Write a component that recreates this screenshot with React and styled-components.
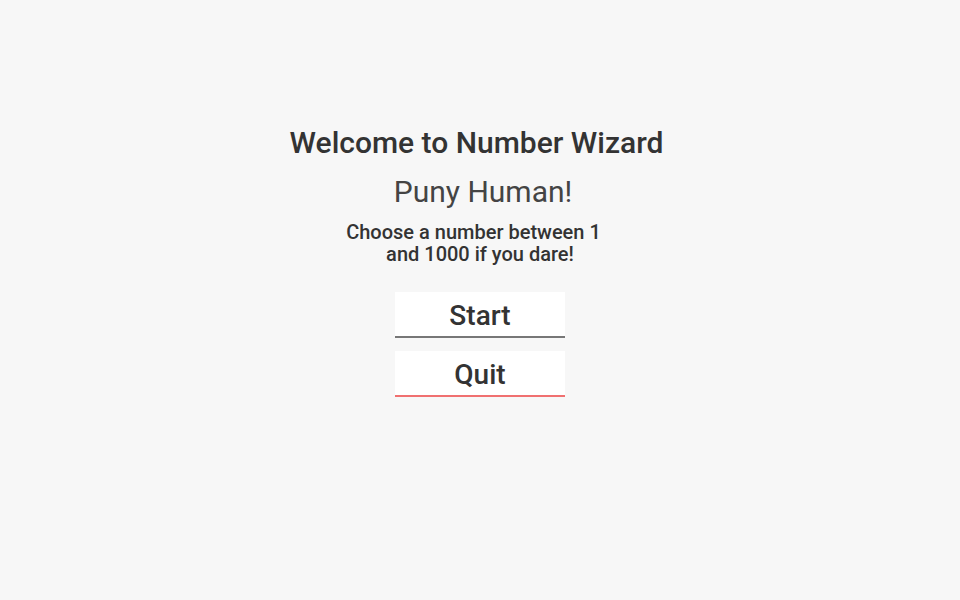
import React from "react";
import styled, { createGlobalStyle } from "styled-components";

const Global = createGlobalStyle`
  html, body { margin: 0; padding: 0; background: #f7f7f7; }
  body { font-family: Roboto, "Noto Sans", sans-serif; color: #333; }
`;

const Page = styled.div`
  width: 960px;
  height: 600px;
  display: flex;
  flex-direction: column;
  align-items: center;
  padding-top: 125px;
  box-sizing: border-box;
`;

const Title = styled.h1`
  margin: 0 7px 0 0;
  font-size: 30px;
  font-weight: 500;
  line-height: 36px;
  color: #333;
`;

const Subtitle = styled.h2`
  margin: 13px 0 0 6px;
  font-size: 30px;
  font-weight: 400;
  line-height: 36px;
  color: #444;
`;

const Prompt = styled.p`
  margin: 11px 0 0;
  width: 270px;
  text-align: center;
  font-size: 20px;
  font-weight: 500;
  line-height: 22px;
  color: #333;
`;

const Line = styled.span`
  display: block;
  padding-right: ${(p) => p.$shift || 0}px;
`;

const Buttons = styled.div`
  margin-top: 27px;
  display: flex;
  flex-direction: column;
  gap: 13px;
`;

const Button = styled.button`
  width: 170px;
  height: 46px;
  box-sizing: border-box;
  border: none;
  border-bottom: 2px solid ${(p) => p.$accent};
  background: #fff;
  font-family: Roboto, "Noto Sans", sans-serif;
  font-size: 28px;
  font-weight: 500;
  color: #333;
  padding: 3px 0 0;
  cursor: pointer;
`;

export default function App() {
  return (
    <>
      <Global />
      <Page>
        <Title>Welcome to Number Wizard</Title>
        <Subtitle>Puny Human!</Subtitle>
        <Prompt>
          <Line $shift={13}>Choose a number between 1</Line>
          <Line>and 1000 if you dare!</Line>
        </Prompt>
        <Buttons>
          <Button $accent="#777">Start</Button>
          <Button $accent="#f07070">Quit</Button>
        </Buttons>
      </Page>
    </>
  );
}
